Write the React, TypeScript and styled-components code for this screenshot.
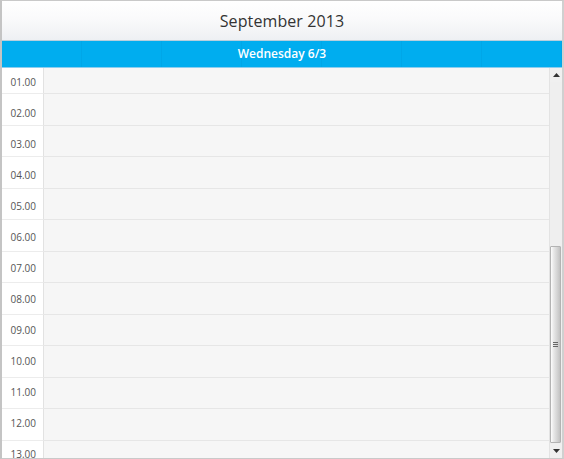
import React from 'react';
import styled, { createGlobalStyle } from 'styled-components';

const GlobalStyle = createGlobalStyle`
  html, body {
    margin: 0;
    padding: 0;
    background: #ffffff;
  }
  * {
    box-sizing: border-box;
  }
`;

const Frame = styled.div`
  width: 564px;
  height: 459px;
  display: flex;
  flex-direction: column;
  border: 1px solid #c9c9c9;
  border-left: 2px solid #c4c4c4;
  border-right: 2px solid #d0d0d0;
  font-family: 'Open Sans', 'Liberation Sans', sans-serif;
  background: #fff;
  overflow: hidden;
`;

const Header = styled.div`
  height: 40px;
  flex-shrink: 0;
  display: flex;
  align-items: center;
  justify-content: center;
  background: linear-gradient(to bottom, #ffffff 0%, #fafafb 45%, #eef0f3 100%);
  border-bottom: 1px solid #b8cfdd;
  font-size: 16px;
  color: #333;
  letter-spacing: 0.1px;
`;

const DayBar = styled.div`
  height: 27px;
  flex-shrink: 0;
  display: flex;
  align-items: center;
  justify-content: center;
  background-color: #00adef;
  background-image: repeating-linear-gradient(
    to right,
    transparent 0px,
    transparent 79px,
    rgba(0, 80, 140, 0.07) 79px,
    rgba(0, 80, 140, 0.07) 80px
  );
  border-bottom: 1px solid #8ccdee;
  color: #fff;
  font-size: 12px;
  font-weight: 600;
  padding-bottom: 1px;
`;

const Body = styled.div`
  flex: 1;
  display: flex;
  min-height: 0;
`;

const Viewport = styled.div`
  flex: 1;
  overflow: hidden;
  background: #f5f5f5;
`;

const Rows = styled.div<{ $offset: number }>`
  display: flex;
  flex-direction: column;
  margin-top: ${p => -p.$offset}px;
`;

const Row = styled.div`
  height: 31.5px;
  flex-shrink: 0;
  display: flex;
`;

const TimeCell = styled.div<{ $index: number }>`
  width: 42px;
  flex-shrink: 0;
  background: #fff;
  border-right: 1px solid #e2e2e2;
  border-bottom: 1px solid #ececec;
  font-size: 10px;
  line-height: 14px;
  color: #555;
  text-align: right;
  padding: ${p => 12 - p.$index * 0.5}px 7px 0 0;
`;

const SlotCell = styled.div`
  flex: 1;
  background: #f6f6f6;
  border-bottom: 1px solid #e6e6e6;
`;

const Scrollbar = styled.div`
  width: 13px;
  flex-shrink: 0;
  display: flex;
  flex-direction: column;
  background: #efefef;
  border-left: 1px solid #e3e3e3;
`;

const ArrowButton = styled.div`
  height: 14px;
  flex-shrink: 0;
  display: flex;
  align-items: center;
  justify-content: center;
  background: #f0f0f0;
`;

const Track = styled.div`
  flex: 1;
  display: flex;
  flex-direction: column;
  justify-content: flex-end;
  padding-bottom: 1px;
`;

const Thumb = styled.div<{ $size: number }>`
  height: ${p => p.$size}px;
  margin: 0 1px 0 0;
  border: 1px solid #b3b3b3;
  border-radius: 1px;
  background: linear-gradient(to right, #fdfdfd 0%, #e8e8e8 30%, #d3d3d3 70%, #c2c2c2 100%);
  display: flex;
  align-items: center;
  justify-content: center;
`;

const hours = ['01.00', '02.00', '03.00', '04.00', '05.00', '06.00', '07.00', '08.00', '09.00', '10.00', '11.00', '12.00', '13.00', '14.00'];

function Arrow({ down }: { down?: boolean }) {
  return (
    <svg width="7" height="4" viewBox="0 0 7 4">
      {down ? <path d="M0 0 H7 L3.5 4 Z" fill="#333" /> : <path d="M0 4 H7 L3.5 0 Z" fill="#333" />}
    </svg>
  );
}

export default function App() {
  return (
    <>
      <GlobalStyle />
      <Frame>
        <Header>September 2013</Header>
        <DayBar>Wednesday 6/3</DayBar>
        <Body>
          <Viewport>
            <Rows $offset={5.5}>
              {hours.map((h, i) => (
                <Row key={h}>
                  <TimeCell $index={i}>{h}</TimeCell>
                  <SlotCell />
                </Row>
              ))}
            </Rows>
          </Viewport>
          <Scrollbar>
            <ArrowButton>
              <Arrow />
            </ArrowButton>
            <Track>
              <Thumb $size={197}>
                <svg width="5" height="6" viewBox="0 0 5 6">
                  <path d="M0 0.5 H5 M0 2.5 H5 M0 4.5 H5" stroke="#666" strokeWidth="1" />
                </svg>
              </Thumb>
            </Track>
            <ArrowButton>
              <Arrow down />
            </ArrowButton>
          </Scrollbar>
        </Body>
      </Frame>
    </>
  );
}
